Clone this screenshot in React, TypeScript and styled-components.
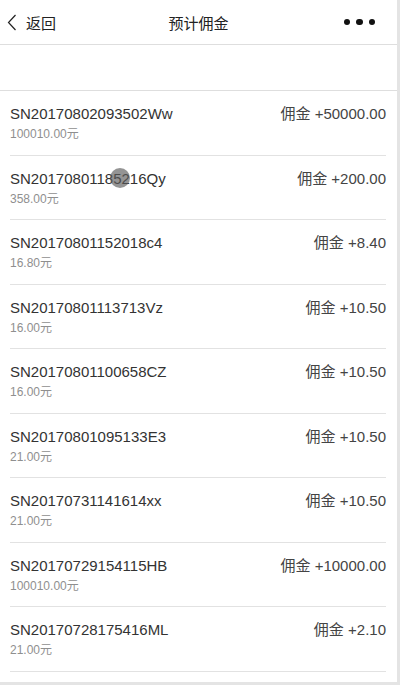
import React from 'react';
import styled, { createGlobalStyle } from 'styled-components';

const GlobalStyle = createGlobalStyle`
  html, body {
    margin: 0;
    padding: 0;
    background: #e4e4e4;
  }
  body {
    font-family: "Liberation Sans", "Noto Sans CJK SC", sans-serif;
    color: #333;
  }
`;

const Page = styled.div`
  position: relative;
  width: 397px;
  height: 682px;
  background: #fff;
  overflow: hidden;
`;

const NavBar = styled.div`
  height: 44px;
  display: flex;
  align-items: center;
  justify-content: space-between;
  padding: 0 22px 0 7px;
  border-bottom: 1px solid #dedede;
  position: relative;
`;

const BackButton = styled.div`
  display: flex;
  align-items: center;
  gap: 9px;
  font-size: 15px;
  color: #222;
`;

const NavTitle = styled.div`
  position: absolute;
  left: 0;
  right: 0;
  text-align: center;
  font-size: 15px;
  color: #222;
  pointer-events: none;
`;

const Dots = styled.div`
  display: flex;
  gap: 6px;
`;

const Dot = styled.span`
  width: 6.5px;
  height: 6.5px;
  border-radius: 50%;
  background: #111;
`;

const Spacer = styled.div`
  height: 45px;
  border-bottom: 1px solid #dedede;
`;

const List = styled.div`
  padding: 0 11px 0 10px;
`;

const Row = styled.div`
  height: 63.5px;
  box-sizing: content-box;
  border-bottom: 1px solid #e2e2e2;
  display: flex;
  justify-content: space-between;
  align-items: flex-start;
`;

const Left = styled.div`
  padding-top: 13px;
  display: flex;
  flex-direction: column;
`;

const OrderNo = styled.div`
  font-size: 15px;
  line-height: 20px;
  color: #333;
`;

const Amount = styled.div`
  margin-top: 2px;
  font-size: 12px;
  line-height: 16px;
  color: #8f8f8f;
`;

const Commission = styled.div`
  padding-top: 13px;
  font-size: 15px;
  line-height: 20px;
  color: #444;
`;

const Touch = styled.span`
  position: absolute;
  left: 110px;
  top: 168px;
  width: 20px;
  height: 20px;
  border-radius: 50%;
  background: rgba(90, 90, 90, 0.65);
`;

const orders = [
  { no: 'SN20170802093502Ww', amount: '100010.00', commission: '50000.00' },
  { no: 'SN20170801185216Qy', amount: '358.00', commission: '200.00' },
  { no: 'SN20170801152018c4', amount: '16.80', commission: '8.40' },
  { no: 'SN20170801113713Vz', amount: '16.00', commission: '10.50' },
  { no: 'SN20170801100658CZ', amount: '16.00', commission: '10.50' },
  { no: 'SN20170801095133E3', amount: '21.00', commission: '10.50' },
  { no: 'SN20170731141614xx', amount: '21.00', commission: '10.50' },
  { no: 'SN20170729154115HB', amount: '100010.00', commission: '10000.00' },
  { no: 'SN20170728175416ML', amount: '21.00', commission: '2.10' },
];

const ChevronLeft = () => (
  <svg width="10" height="17" viewBox="0 0 10 17">
    <path d="M8.5 1 L1.5 8.5 L8.5 16" fill="none" stroke="#222" strokeWidth="1.2" />
  </svg>
);

export default function App() {
  return (
    <>
      <GlobalStyle />
      <Page>
        <NavBar>
          <BackButton>
            <ChevronLeft />
            <span>返回</span>
          </BackButton>
          <NavTitle>预计佣金</NavTitle>
          <Dots>
            <Dot />
            <Dot />
            <Dot />
          </Dots>
        </NavBar>
        <Spacer />
        <List>
          {orders.map((o) => (
            <Row key={o.no}>
              <Left>
                <OrderNo>{o.no}</OrderNo>
                <Amount>{o.amount}元</Amount>
              </Left>
              <Commission>佣金 +{o.commission}</Commission>
            </Row>
          ))}
        </List>
        <Touch />
      </Page>
    </>
  );
}
